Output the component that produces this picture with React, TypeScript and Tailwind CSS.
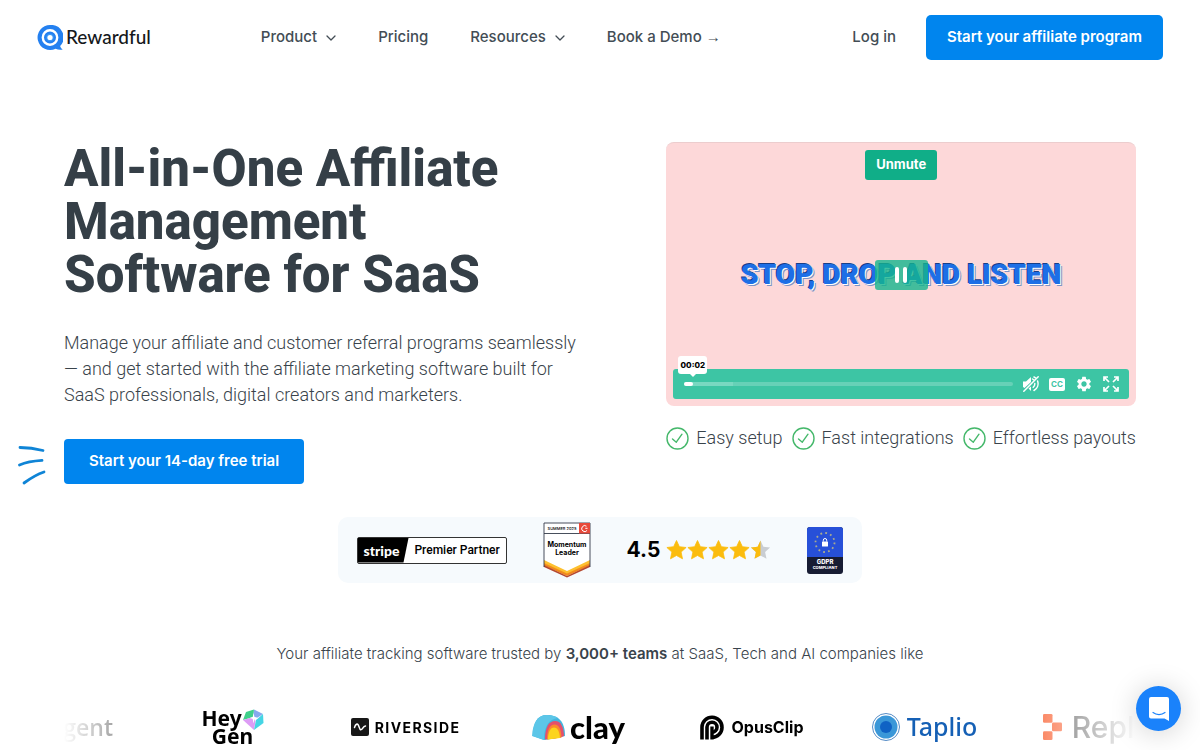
import { MdSettings } from "react-icons/md";

function ChevronDown() {
  return (
    <svg className="w-[10px] h-[6px]" viewBox="0 0 10 6" fill="none" stroke="currentColor" strokeWidth="1.3" strokeLinecap="round" strokeLinejoin="round">
      <path d="M1 1l4 4 4-4" />
    </svg>
  );
}

function Header() {
  return (
    <header className="flex items-center h-[75px] px-[37px] text-[15px] font-medium text-[#434d55] font-['Inter',sans-serif]">
      <a href="#" className="flex items-center gap-[3px] text-[#15181b] font-['Lato',sans-serif]">
        <svg className="w-[26px] h-[26px]" viewBox="0 0 26 26" fill="none">
          <path d="M13 0a12.500 12.500 0 1 0 5.600 23.700c2 1 4.500 1.300 7.100.8-1.500-1-2.300-2.200-2.500-3.500A12.500 12.500 0 0 0 13 0z" fill="#2480f0" />
          <circle cx="13" cy="12.500" r="7.200" stroke="#fff" strokeWidth="2.400" />
          <circle cx="13" cy="12.500" r="3.700" fill="#3b97f5" />
          <circle cx="13" cy="12.500" r="2.600" fill="#fff" />
        </svg>
        <span className="text-[19px]">Rewardful</span>
      </a>
      <nav className="flex items-center gap-[42px] ml-[110px]">
        <button className="flex items-center gap-[9px]">
          Product <ChevronDown />
        </button>
        <a href="#">Pricing</a>
        <button className="flex items-center gap-[9px]">
          Resources <ChevronDown />
        </button>
        <a href="#">
          Book a Demo <span className="font-normal font-['Liberation_Sans',sans-serif]">→</span>
        </a>
      </nav>
      <div className="flex items-center gap-[30px] ml-auto">
        <a href="#">Log in</a>
        <button className="bg-[#0085ee] hover:bg-[#0078d8] text-white font-semibold rounded-[5px] h-[45px] px-[21px]">
          Start your affiliate program
        </button>
      </div>
    </header>
  );
}

function Video() {
  return (
    <div className="relative w-full aspect-video rounded-lg bg-[#fdd8d9] border-t border-[#eccdce] flex items-center justify-center font-['Inter',sans-serif]">
      <p className="text-[28px] font-black whitespace-nowrap text-[#1d6fe6] [text-shadow:1px_1px_0_#fff,-1px_-1px_0_#173f8a,2px_2px_0_#7f93c4] font-['Roboto',sans-serif]">
        STOP, DROP AND LISTEN
      </p>
      <button className="absolute top-[7px] left-1/2 -translate-x-1/2 w-[72px] h-[30px] rounded-[3px] bg-[#10ae88] text-white text-[13px] font-bold">
        Unmute
      </button>
      <button aria-label="Pause" className="absolute w-[53px] h-[30px] rounded-[3px] bg-[#14b58c]/80 flex items-center justify-center gap-1">
        <span className="w-1 h-4 rounded-sm bg-white" />
        <span className="w-1 h-4 rounded-sm bg-white" />
      </button>
      <div className="absolute left-[7px] right-[7px] bottom-[7px] h-[30px] rounded-[3px] bg-[#3dc5a4] text-white flex items-center gap-[10px] pl-[11px] pr-[10px]">
        <input
          type="range"
          aria-label="Seek"
          min="0"
          max="100"
          defaultValue="0"
          className="flex-1 min-w-0 h-[4px] rounded-full appearance-none bg-[linear-gradient(to_right,#79d8c1_15%,#66d1b7_15%)] [&::-webkit-slider-thumb]:appearance-none [&::-webkit-slider-thumb]:w-[9px] [&::-webkit-slider-thumb]:h-1 [&::-webkit-slider-thumb]:rounded-full [&::-webkit-slider-thumb]:bg-white"
        />
        <div className="flex items-center gap-[10px]">
          <button aria-label="Mute">
            <svg className="w-4 h-4" viewBox="0 0 16 16" fill="none">
              <path d="M0 5.500h3L8 1v5L1.500 12 0 11z" fill="#fff" />
              <path d="M8 15v-4.500l-2.500 2z" fill="#fff" />
              <path d="M.8 15.200L15.200.8" stroke="#fff" strokeWidth="1.500" strokeLinecap="round" />
              <path d="M11.800 7.500a5 5 0 0 1-1.600 3.800M14.600 5a8 8 0 0 1-3.600 9.500M9.500 3l1.500 1M11 1l1.500.9" stroke="#fff" strokeWidth="1.500" strokeLinecap="round" />
            </svg>
          </button>
          <button aria-label="Captions" className="w-4 h-[13px] rounded-[2px] bg-white text-[#3dc5a4] text-[8px] leading-[13px] font-bold">
            CC
          </button>
          <button aria-label="Settings">
            <MdSettings className="w-[18px] h-[18px]" />
          </button>
          <button aria-label="Full screen">
            <svg className="w-4 h-4" viewBox="0 0 16 16" fill="none" stroke="#fff" strokeWidth="1.700">
              <path d="M1 5V1h4M1 1l5 5M11 1h4v4M15 1l-5 5M1 11v4h4M1 15l5-5M15 11v4h-4M15 15l-5-5" />
            </svg>
          </button>
        </div>
      </div>
      <div className="absolute left-[12px] bottom-[32px] w-[29px] h-[18px] rounded-[3px] bg-white text-black text-[8px] leading-[18px] font-extrabold text-center">
        00:02
        <span className="absolute left-1/2 -translate-x-1/2 -bottom-[3px] border-x-[3px] border-t-[3px] border-x-transparent border-t-white" />
      </div>
    </div>
  );
}

function Feature({ label }: { label: string }) {
  return (
    <li className="flex items-center gap-[7px]">
      <svg className="w-[23px] h-[23px]" viewBox="0 0 23 23" fill="none" stroke="#45b86b" strokeWidth="1.400" strokeLinecap="round" strokeLinejoin="round">
        <circle cx="11.500" cy="11.500" r="10.500" />
        <path d="M6.500 12l3.800 3.200 5.700-8" />
      </svg>
      {label}
    </li>
  );
}

function Hero() {
  return (
    <section className="grid grid-cols-[9fr_8fr] gap-[74px] items-start px-16 pt-[67px] font-['Roboto',sans-serif]">
      <div>
        <h1 className="text-[51px] leading-[53px] font-extrabold text-[#353f47] whitespace-nowrap">
          All-in-One Affiliate
          <br />
          Management
          <br />
          Software for SaaS
        </h1>
        <p className="mt-[29px] text-[18px] leading-[26px] font-light text-[#39434b] whitespace-nowrap">
          Manage your affiliate and customer referral programs seamlessly
          <br />
          — and get started with the affiliate marketing software built for
          <br />
          SaaS professionals, digital creators and marketers.
        </p>
        <div className="relative mt-[31px]">
          <svg className="absolute -left-[46px] top-[6px] w-7 h-10" viewBox="0 0 28 40" fill="none" stroke="#0f84d6" strokeWidth="2.800" strokeLinecap="round">
            <path d="M2 2.500c8 0 14 .7 23 3" />
            <path d="M1.500 20c7-3 13-4 22.500-4.600" />
            <path d="M6 38c5.500-4 11-8 20-11" />
          </svg>
          <button className="bg-[#0085ee] hover:bg-[#0078d8] text-white text-[15px] font-semibold rounded-[4px] h-[45px] px-[25px] font-['Inter',sans-serif]">
            Start your 14-day free trial
          </button>
        </div>
      </div>
      <div>
        <Video />
        <ul className="flex justify-between mt-5 text-[18px] leading-6 font-light text-[#39434b] whitespace-nowrap">
          <Feature label="Easy setup" />
          <Feature label="Fast integrations" />
          <Feature label="Effortless payouts" />
        </ul>
      </div>
    </section>
  );
}

const star = "M10 .5l2.900 6.200 6.700.8-5 4.600 1.400 6.700L10 15.500l-6 3.300 1.400-6.700-5-4.600 6.700-.8z";

function Badges() {
  return (
    <section className="flex items-center gap-9 w-fit h-[66px] mx-auto mt-[33px] px-[19px] rounded-[10px] bg-[#f6fafd] text-black font-['Inter',sans-serif]">
      <div className="flex items-center w-[150px] h-[27px] border border-[#333] rounded-[2px] bg-white">
        <span className="flex items-center w-[51px] h-full pl-[6px] bg-black text-white text-[14px] font-black font-['Lato',sans-serif] [clip-path:polygon(0_0,100%_0,90%_100%,0_100%)]">
          stripe
        </span>
        <span className="flex-1 text-center text-[12px] font-medium font-['Roboto',sans-serif]">Premier Partner</span>
      </div>
      <svg className="w-12 h-14" viewBox="0 0 48 56" fontFamily="Inter, sans-serif" fontWeight="700" textAnchor="middle">
        <path d="M1 1h46v43L24 54 1 44z" fill="#fff" />
        <path d="M1 38l23 11 23-11v3.500L24 52.500 1 41.500z" fill="#fdc02f" />
        <path d="M1 41l23 10.500L47 41v2.500L24 54 1 43.500z" fill="#f28a1c" />
        <path d="M1 43l23 11 23-11v2L24 55.500 1 45z" fill="#b5482f" />
        <path d="M1 45V1h46v44M1 11.500h46" fill="none" stroke="#333b49" strokeWidth=".9" />
        <rect x="36" y="1" width="11" height="10.500" fill="#e8493a" />
        <path d="M43.500 4.200a3 3 0 1 0 .6 4.200M42.300 6.300h2.200" fill="none" stroke="#fff" strokeWidth="1" />
        <text x="19" y="8" fontSize="4" fontWeight="500">SUMMER 2025</text>
        <text x="24" y="25" fontSize="7">Momentum</text>
        <text x="24" y="33" fontSize="7">Leader</text>
      </svg>
      <div className="flex items-center gap-[6px]">
        <span className="text-[21px] font-bold">4.5</span>
        <div className="flex">
          {[0, 1, 2, 3].map((i) => (
            <svg key={i} className="w-[21px] h-5" viewBox="0 0 20 20" fill="#fbbc0e" stroke="#fbbc0e" strokeWidth=".8" strokeLinejoin="round">
              <path d={star} />
            </svg>
          ))}
          <svg className="w-[21px] h-5" viewBox="0 0 20 20">
            <path d={star} fill="#c9cdd2" />
            <path d={star} fill="#fbbc0e" className="[clip-path:inset(0_50%_0_0)]" />
          </svg>
        </div>
      </div>
      <svg className="w-9 h-[47px]" viewBox="0 0 36 47" fontFamily="Inter, sans-serif" fontWeight="800" textAnchor="middle">
        <rect width="36" height="47" rx="3" fill="#171c33" />
        <path d="M0 30V3a3 3 0 0 1 3-3h30a3 3 0 0 1 3 3v27z" fill="#2750d8" />
        <circle cx="18" cy="15.500" r="9.500" fill="none" stroke="#a9ab8f" strokeWidth="1.800" strokeDasharray="1.800 3.174" />
        <rect x="15" y="14.500" width="6" height="5" rx=".6" fill="#fff" />
        <path d="M16.300 14.500v-1.300a1.700 1.700 0 0 1 3.400 0v1.300" fill="none" stroke="#fff" strokeWidth="1" />
        <text x="18" y="37" fontSize="6" fill="#fff">GDPR</text>
        <text x="18" y="42" fontSize="4" fill="#fff">COMPLIANT</text>
      </svg>
    </section>
  );
}

function Logos() {
  return (
    <section className="px-16">
      <div className="overflow-hidden mt-[39px] [mask-image:linear-gradient(to_right,transparent,#000_140px,#000_calc(100%-140px),transparent)]">
        <ul className="flex w-max h-11 -ml-[91px] text-black font-['Inter',sans-serif]">
          <li className="w-[173px] flex items-center justify-end pr-[33px] text-[23px] font-semibold font-['Open_Sans',sans-serif]">gent</li>
          <li className="w-[173px] flex items-center justify-center">
            <div className="relative w-[62px] text-[21px] leading-[18px] font-bold font-['Noto_Sans',sans-serif]">
              Hey
              <div className="text-center">Gen</div>
              <svg className="absolute top-0 right-0 w-[22px] h-[22px]" viewBox="0 0 22 22">
                <path d="M1 11L4 3l8-2.500-.5 7.500z" fill="#3fd08a" />
                <path d="M12 .5l9 4.500-6 4-3.500-1z" fill="#86a9ee" />
                <path d="M1 11l10.500-3 2 4L12 21z" fill="#dd9cf5" />
                <path d="M21 5l.5 9L12 21l2-10z" fill="#45d5e4" />
                <path d="M11.500 4l1 4 4 1-4 1.500-1 4-.8-4.500-3-1 3-1z" fill="#fff" />
              </svg>
            </div>
          </li>
          <li className="w-[173px] flex items-center justify-center gap-[6px] text-[14px] font-bold tracking-widest">
            <svg className="w-[18px] h-[18px]" viewBox="0 0 18 18">
              <rect width="18" height="18" rx="2" fill="#171717" />
              <path d="M3.500 9.500c1-3.500 3-4.500 4-2s1.500 5 3 4 1.500-3 4-3.500" fill="none" stroke="#fff" strokeWidth="1.500" strokeLinecap="round" />
            </svg>
            RIVERSIDE
          </li>
          <li className="w-[173px] flex items-center justify-center gap-1">
            <svg className="w-[34px] h-[27px]" viewBox="0 0 34 27">
              <path d="M1 22C1 9 5 1 15 1c11 0 18 6 18 21l-8 2-13 2z" fill="#43b5de" />
              <path d="M0 22C1 9 5 1 15 1c5 0 9 1.500 11 3C17 5 12 12 12 26z" fill="#5cc6e8" />
              <path d="M13 25.500C13 13 17 7 23 7s8.500 6 9 15l-3.500 1.500z" fill="#e4506c" />
              <path d="M15 25.500c0-9.500 3-15 7.500-15s6.500 5 7 13z" fill="#fb8a2c" />
              <path d="M16 25.500c0-7.500 2.500-12 6-12s5.500 4 6 10.500z" fill="#fcd41d" />
            </svg>
            <span className="text-[31px] leading-8 font-black font-['Lato',sans-serif]">clay</span>
          </li>
          <li className="w-[173px] flex items-center justify-center gap-2 text-[16px] font-bold">
            <svg className="w-6 h-[25px]" viewBox="0 0 24 25" fill="none" stroke="#000">
              <path d="M2 24.500V12A10 10 0 1 1 12 22.300" strokeWidth="3.600" />
              <path d="M7 24.500V12a5 5 0 1 1 5 5.200" strokeWidth="3.600" />
              <path d="M12 24.500V11.500" strokeWidth="3.400" />
            </svg>
            OpusClip
          </li>
          <li className="w-[173px] flex items-center justify-center gap-[7px] text-[#1560b5] text-[25px] font-medium font-['Noto_Sans',sans-serif]">
            <svg className="w-7 h-7" viewBox="0 0 28 28">
              <circle cx="14" cy="14" r="13.500" fill="#fff" stroke="#2a6fb8" strokeWidth=".8" />
              <circle cx="14" cy="14" r="11.500" fill="#3a97d8" />
              <circle cx="14" cy="14" r="6" fill="#0f62c4" />
            </svg>
            Taplio
          </li>
          <li className="w-[173px] flex items-center justify-center gap-[10px] text-[30px] font-medium text-[#333]">
            <svg className="w-[19px] h-[26px]" viewBox="0 0 19 26" fill="#f8501c">
              <rect width="9.500" height="8.800" rx="1.300" />
              <rect x="9" y="8.600" width="10" height="8.600" rx="1.300" />
              <rect y="17.200" width="9.500" height="8.800" rx="1.300" />
            </svg>
            Replit
          </li>
        </ul>
      </div>
    </section>
  );
}

export default function App() {
  return (
    <div className="min-h-screen overflow-hidden bg-white">
      <Header />
      <main>
        <Hero />
        <Badges />
        <p className="mt-[59px] text-center text-[15px] leading-6 font-light text-[#39434b] font-['Inter',sans-serif]">
          Your affiliate tracking software trusted by <b className="font-semibold">3,000+ teams</b> at SaaS, Tech and AI companies like
        </p>
        <Logos />
      </main>
      <button aria-label="Open chat" className="fixed right-[19px] bottom-[19px] w-[45px] h-[45px] rounded-full bg-[#1a82fb] shadow-[0_2px_28px_rgba(0,0,0,0.18)] flex items-center justify-center">
        <svg className="w-5 h-6" viewBox="0 0 20 24">
          <path d="M2 0h16a2 2 0 0 1 2 2v22l-4.500-2.500H2a2 2 0 0 1-2-2V2a2 2 0 0 1 2-2z" fill="#fff" />
          <path d="M4 15.500c3.500 2.700 8.500 2.700 12 0" fill="none" stroke="#1a82fb" strokeWidth="1.200" strokeLinecap="round" />
        </svg>
      </button>
    </div>
  );
}
